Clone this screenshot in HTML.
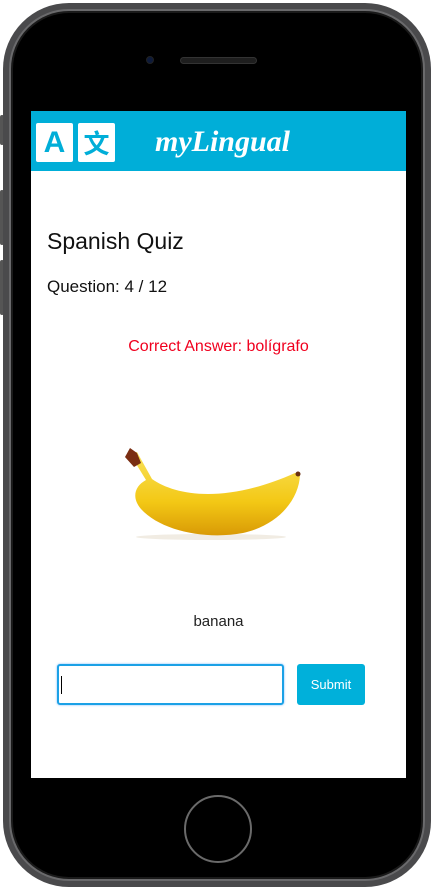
<!DOCTYPE html>
<html><head><meta charset="utf-8"><style>
*{margin:0;padding:0;box-sizing:border-box}
body{width:435px;height:889px;background:#fff;position:relative;overflow:hidden;font-family:"Liberation Sans",sans-serif}
.outer{position:absolute;left:3px;top:3px;width:428px;height:884px;border-radius:66px;background:#4a4a4c;}
.ring{position:absolute;left:9px;top:9px;width:416px;height:872px;border-radius:60px;background:#1a1a1a;border:2px solid #6a6a6c}
.inner{position:absolute;left:13px;top:13px;width:408px;height:864px;border-radius:56px;background:#000}
.btn{position:absolute;left:0;width:4px;background:#555;border-radius:2px}
.screen{position:absolute;left:31px;top:111px;width:375px;height:667px;background:#fff;overflow:hidden}
.hdr{height:60px;background:#00aed8;position:relative}
.ic{position:absolute;top:12px;width:37px;height:39px;background:#fff;border-radius:2px;color:#00aed8;font-weight:bold;text-align:center;line-height:40px;font-size:30px}
.logo{position:absolute;left:124px;top:14px;color:#fff;font:italic bold 30px "Liberation Serif",serif}
h1{position:absolute;left:16px;top:117px;font-weight:normal;font-size:23px;color:#111}
.q{position:absolute;left:16px;top:166px;font-size:17px;color:#111}
.ca{position:absolute;left:0;width:375px;text-align:center;top:227px;font-size:16px;color:#f0001e}
.word{position:absolute;left:0;width:375px;text-align:center;top:502px;font-size:15px;color:#222}
.inp{position:absolute;left:26px;top:553px;width:227px;height:41px;border:2px solid #1ba1e6;border-radius:3px;box-shadow:0 0 2px #7ab8ff}
.inp:after{content:"";position:absolute;left:2px;top:10px;width:1px;height:18px;background:#000}
.sub{position:absolute;left:266px;top:553px;width:68px;height:41px;background:#00b0da;border-radius:3px;color:#fff;font-size:13px;text-align:center;line-height:41px}
</style></head><body>
<div class="btn" style="top:115px;height:30px"></div>
<div class="btn" style="top:190px;height:55px"></div>
<div class="btn" style="top:260px;height:55px"></div>
<div class="outer"></div><div class="ring"></div><div class="inner"></div>
<div style="position:absolute;left:146px;top:56px;width:8px;height:8px;border-radius:50%;background:#0d1a3a;border:1px solid #222"></div>
<div style="position:absolute;left:180px;top:57px;width:77px;height:7px;border-radius:4px;background:#1e1e1e;border:1px solid #333"></div>
<div style="position:absolute;left:184px;top:795px;width:68px;height:68px;border-radius:50%;border:2px solid #6a6a6a;background:#000"></div>
<div class="screen">
<div class="hdr">
<div class="ic" style="left:5px">A</div>
<div class="ic" style="left:47px;font-family:'Noto Sans CJK SC',sans-serif;font-size:26px">文</div>
<div class="logo">myLingual</div>
</div>
<h1>Spanish Quiz</h1>
<div class="q">Question: 4 / 12</div>
<div class="ca">Correct Answer: bolígrafo</div>
<svg style="position:absolute;left:0;top:0" width="375" height="667">
<defs><linearGradient id="g" x1="0" y1="0" x2="0" y2="1"><stop offset="0" stop-color="#f9e25a"/><stop offset="0.6" stop-color="#f3c815"/><stop offset="1" stop-color="#d99a06"/></linearGradient></defs>
<ellipse cx="180" cy="426" rx="75" ry="3" fill="#e8e0d0" opacity="0.6"/>
<path d="M99 343 L106 341 L121 368 C145 385 195 393 264 362 L269 364 C268 388 248 414 212 422 C175 429 130 420 110 398 C100 386 104 375 115 369 Z" fill="url(#g)"/>
<path d="M94 346 L99 337 L106 342 L110 352 L103 356 Z" fill="#7a2e12"/>
<circle cx="267" cy="363" r="2.5" fill="#6a3010"/>
</svg>
<div class="word">banana</div>
<div class="inp"></div>
<div class="sub">Submit</div>
</div>
</body></html>
